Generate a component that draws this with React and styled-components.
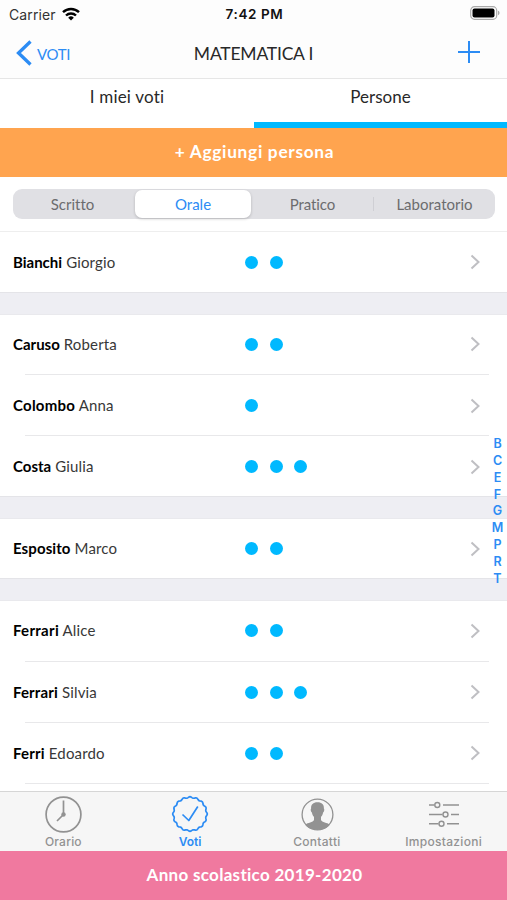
import React from 'react';
import styled, { createGlobalStyle } from 'styled-components';

const BLUE = '#2c8cf4';
const CYAN = '#00b9ff';
const GREY = '#929292';

const GlobalStyle = createGlobalStyle`
    * {
        box-sizing: border-box;
    }

    body {
        margin: 0;
        background: #fff;
        font-family: Lato, 'Noto Sans', sans-serif;
        font-variant-ligatures: none;
    }
`;

const Screen = styled.div`
    width: 507px;
    height: 900px;
    display: flex;
    flex-direction: column;
    overflow: hidden;
    position: relative;
    background: #fff;
    color: #282828;
    white-space: nowrap;
`;

const Label = styled.span`
    letter-spacing: ${p => p.$spacing || 0}px;
`;

const StatusBar = styled.div`
    height: 28px;
    padding: 0 7px 0 9px;
    display: grid;
    grid-template-columns: 1fr auto 1fr;
    align-items: center;
    background: #fdfdfd;
    font-family: Inter, sans-serif;
    font-size: 14px;
`;

const Carrier = styled.div`
    display: flex;
    align-items: center;
    gap: 6px;
    color: #333;

    svg {
        margin-bottom: 1px;
    }
`;

const Time = styled.div`
    font-weight: 600;
    font-size: 13.5px;
    letter-spacing: 0.6px;
    color: #111;
`;

const Battery = styled.svg`
    justify-self: end;
    margin-bottom: 2px;
`;

const NavBar = styled.div`
    height: 51px;
    padding: 0 16px;
    display: grid;
    grid-template-columns: 1fr auto 1fr;
    align-items: center;
    background: #fdfdfd;
    border-bottom: 1px solid #e6e6e6;
`;

const Back = styled.div`
    display: flex;
    align-items: center;
    gap: 5px;
    color: ${BLUE};
    font-size: 15px;
    padding-top: 1px;

    svg {
        margin-bottom: 2px;
    }
`;

const NavTitle = styled.div`
    font-size: 17.5px;
`;

const AddIcon = styled.svg`
    justify-self: end;
    margin-right: 11px;
    margin-bottom: 2px;
`;

const Tabs = styled.div`
    height: 49px;
    display: grid;
    grid-template-columns: 254px 253px;
    font-size: 17px;
    line-height: 36px;
    text-align: center;
`;

const Tab = styled.div`
    border-bottom: 6px solid ${p => (p.$active ? CYAN : 'transparent')};
`;

const Banner = styled.div`
    flex: none;
    height: 49px;
    padding: 0 0 2px 2px;
    display: flex;
    align-items: center;
    justify-content: center;
    background: ${p => p.$color};
    color: #fff;
    font-size: ${p => p.$size || 17}px;
    font-weight: 700;
`;

const SegmentBar = styled.div`
    height: 54.7px;
    padding: 12px 12px 0 13px;
    border-bottom: 1px solid #eee;
`;

const Segments = styled.div`
    height: 30px;
    padding: 1px 0 1px 2px;
    display: grid;
    grid-template-columns: 120px 116px 123px 1fr;
    border-radius: 9px;
    background: #e0e0e4;
`;

const Segment = styled.div`
    display: flex;
    align-items: center;
    justify-content: center;
    position: relative;
    font-size: 15px;
    padding-bottom: 1px;
    color: ${p => (p.$active ? BLUE : '#6c6c6e')};
    border-radius: 7px;
    background: ${p => (p.$active ? '#fff' : 'none')};
    box-shadow: ${p => (p.$active ? '0 1px 3px rgba(0, 0, 0, 0.2)' : 'none')};

    &:first-child {
        padding-right: 5px;
    }

    &::after {
        content: '';
        display: ${p => (p.$divider ? 'block' : 'none')};
        position: absolute;
        right: 0;
        width: 1px;
        height: 14px;
        background: #cfcfd4;
    }
`;

const List = styled.div`
    flex: 1;
    min-height: 0;
    overflow: hidden;
`;

const Section = styled.div`
    & + & {
        border-top: 21.3px solid #eeeef3;
        box-shadow: inset 0 1px #e9e9ed;
    }
`;

const Row = styled.div`
    height: 61.15px;
    padding: 0 26px 0 13px;
    display: grid;
    grid-template-columns: 232px 1fr auto;
    align-items: center;
    font-size: 15px;
    background: linear-gradient(#e8e8ea, #e8e8ea) 25px 100% / 464px 1px no-repeat;

    ${Section} > &:last-child {
        background: linear-gradient(#e4e4e8, #e4e4e8) 0 100% / 100% 1px no-repeat;
    }
`;

const Name = styled.div`
    color: #383838;
    letter-spacing: 0.15px;
    padding-bottom: 1px;

    b {
        color: #000;
        letter-spacing: ${p => p.$bold || 0}px;
    }
`;

const Dots = styled.div`
    display: flex;
    gap: 11.5px;
`;

const Dot = styled.span`
    width: 13px;
    height: 13px;
    border-radius: 50%;
    background: ${CYAN};
`;

const IndexList = styled.div`
    position: absolute;
    right: 2px;
    top: 436px;
    width: 15px;
    font-family: Inter, sans-serif;
    font-size: 12.5px;
    font-weight: 600;
    line-height: 16.85px;
    text-align: center;
    color: ${BLUE};
`;

const TabBar = styled.div`
    flex: none;
    height: 60px;
    display: grid;
    grid-template-columns: repeat(4, 1fr);
    background: #f6f6f6;
    border-top: 1px solid #d6d6d6;
`;

const TabItem = styled.div`
    display: flex;
    flex-direction: column;
    align-items: center;
    padding-top: 2px;
    color: ${p => (p.$active ? BLUE : GREY)};
    font-family: Inter, sans-serif;
    font-size: 12px;
    font-weight: ${p => (p.$active ? 600 : 500)};
    line-height: 15px;

    svg {
        flex: none;
        fill: none;
        stroke: currentColor;
    }
`;

// wavy edge of the "Voti" badge
const badgePoints = Array.from({ length: 161 }, (_, i) => {
    const a = (i / 160) * Math.PI * 2;
    const r = 16.7 + 0.6 * Math.cos(a * 16);
    return `${(20 + r * Math.sin(a)).toFixed(2)},${(20 - r * Math.cos(a)).toFixed(2)}`;
}).join(' ');

const ClockIcon = () => (
    <svg width="40" height="40" strokeWidth="1.7">
        <circle cx="20.5" cy="20.5" r="17.4" />
        <path d="M20.5 6.5v14l-6.5 6.5" />
        <circle cx="20.5" cy="20.5" r="2.2" fill="currentColor" stroke="none" />
    </svg>
);

const BadgeIcon = () => (
    <svg width="40" height="40" strokeWidth="1.7" strokeLinejoin="round">
        <polygon points={badgePoints} />
        <path d="M12.5 20.5l6.3 6 9-14" />
    </svg>
);

const ContactIcon = () => (
    <svg width="40" height="40" strokeWidth="1.3">
        <circle cx="20.5" cy="20.5" r="15.4" />
        <path
            d="M20.5 8.3c-4.4 0-6.6 2.4-6.4 6.1-.8.7-.3 3.3.8 4 .4 2.2 1.2 3.6 2.1 4.4v3.2c-.9 2.4-6.3 2.5-8.8 4.7 2.6 3.6 7.1 5.2 12.3 5.2s9.7-1.6 12.3-5.2c-2.5-2.2-7.9-2.3-8.8-4.7v-3.2c.9-.8 1.7-2.2 2.1-4.4 1.1-.7 1.6-3.3.8-4 .2-3.7-2-6.1-6.4-6.1z"
            fill="currentColor"
            stroke="none"
        />
    </svg>
);

const SettingsIcon = () => (
    <svg width="40" height="40" strokeWidth="1.4">
        <path d="M5 11h5.5M19 11h16M5 20.5h13.5M27 20.5h8M5 29.8h9.5M23 29.8h12" />
        <circle cx="13.3" cy="11" r="2.5" />
        <circle cx="21.5" cy="20.5" r="2.5" />
        <circle cx="17.5" cy="29.8" r="2.5" />
    </svg>
);

const Chevron = () => (
    <svg width="11" height="16" fill="none" stroke="#bfbfc3" strokeWidth="2">
        <path d="M1.5 1.5L8.5 8l-7 6.5" />
    </svg>
);

const sections = [
    [{ last: 'Bianchi', first: 'Giorgio', dots: 2 }],
    [
        { last: 'Caruso', first: 'Roberta', dots: 2 },
        { last: 'Colombo', first: 'Anna', dots: 1, bold: 0.25 },
        { last: 'Costa', first: 'Giulia', dots: 3 },
    ],
    [{ last: 'Esposito', first: 'Marco', dots: 2, bold: 0.1 }],
    [
        { last: 'Ferrari', first: 'Alice', dots: 2, bold: 0.3 },
        { last: 'Ferrari', first: 'Silvia', dots: 3, bold: 0.15 },
        { last: 'Ferri', first: 'Edoardo', dots: 2, bold: 0.2 },
        { last: '', first: '', dots: 0 },
    ],
];

export default function App() {
    return (
        <Screen>
            <GlobalStyle />
            <StatusBar>
                <Carrier>
                    <Label $spacing={0.1}>Carrier</Label>
                    <svg width="18" height="14" viewBox="0 0 18 14" fill="none" stroke="#000" strokeWidth="2.4">
                        <path d="M1 5.2a11.5 11.5 0 0 1 16 0M4 8.5a7.2 7.2 0 0 1 10 0" />
                        <path d="M9 13.5L6.2 10.7a4 4 0 0 1 5.6 0z" fill="#000" stroke="none" />
                    </svg>
                </Carrier>
                <Time>7:42 PM</Time>
                <Battery width="30" height="14">
                    <rect x="0.7" y="0.7" width="26" height="12.6" rx="3.8" fill="#fff" stroke="#aaa" strokeWidth="1.2" />
                    <rect x="2.5" y="2.5" width="22" height="9" rx="2" fill="#000" />
                    <path d="M28 4.8c2 .6 2 3.8 0 4.4z" fill="#aaa" />
                </Battery>
            </StatusBar>
            <NavBar>
                <Back>
                    <svg width="16" height="26" fill="none" stroke={BLUE} strokeWidth="3.3">
                        <path d="M14.5 1.5L2.5 13l12 11.5" />
                    </svg>
                    <Label $spacing={-0.3}>VOTI</Label>
                </Back>
                <NavTitle><Label $spacing={-0.2}>MATEMATICA I</Label></NavTitle>
                <AddIcon width="22" height="22" stroke={BLUE} strokeWidth="2">
                    <path d="M11 0v22M0 11h22" />
                </AddIcon>
            </NavBar>
            <Tabs>
                <Tab><Label $spacing={0.2}>I miei voti</Label></Tab>
                <Tab $active><Label>Persone</Label></Tab>
            </Tabs>
            <Banner $color="#ffa44f" $size={17.3}><Label $spacing={0.7}>+ Aggiungi persona</Label></Banner>
            <SegmentBar>
                <Segments>
                    <Segment><Label>Scritto</Label></Segment>
                    <Segment $active><Label>Orale</Label></Segment>
                    <Segment $divider><Label $spacing={-0.1}>Pratico</Label></Segment>
                    <Segment><Label>Laboratorio</Label></Segment>
                </Segments>
            </SegmentBar>
            <List>
                {sections.map((people, i) => (
                    <Section key={i}>
                        {people.map((p, j) => (
                            <Row key={j}>
                                <Name $bold={p.bold}><b>{p.last}</b> {p.first}</Name>
                                <Dots>
                                    {Array.from({ length: p.dots }, (_, k) => <Dot key={k} />)}
                                </Dots>
                                <Chevron />
                            </Row>
                        ))}
                    </Section>
                ))}
            </List>
            <IndexList>
                {'BCEFGMPRT'.split('').map(c => <div key={c}>{c}</div>)}
            </IndexList>
            <TabBar>
                <TabItem><ClockIcon /><Label $spacing={0.2}>Orario</Label></TabItem>
                <TabItem $active><BadgeIcon /><Label>Voti</Label></TabItem>
                <TabItem><ContactIcon /><Label $spacing={0.3}>Contatti</Label></TabItem>
                <TabItem><SettingsIcon /><Label $spacing={0.3}>Impostazioni</Label></TabItem>
            </TabBar>
            <Banner $color="#f0799f"><Label $spacing={0.3}>Anno scolastico 2019-2020</Label></Banner>
        </Screen>
    );
}
